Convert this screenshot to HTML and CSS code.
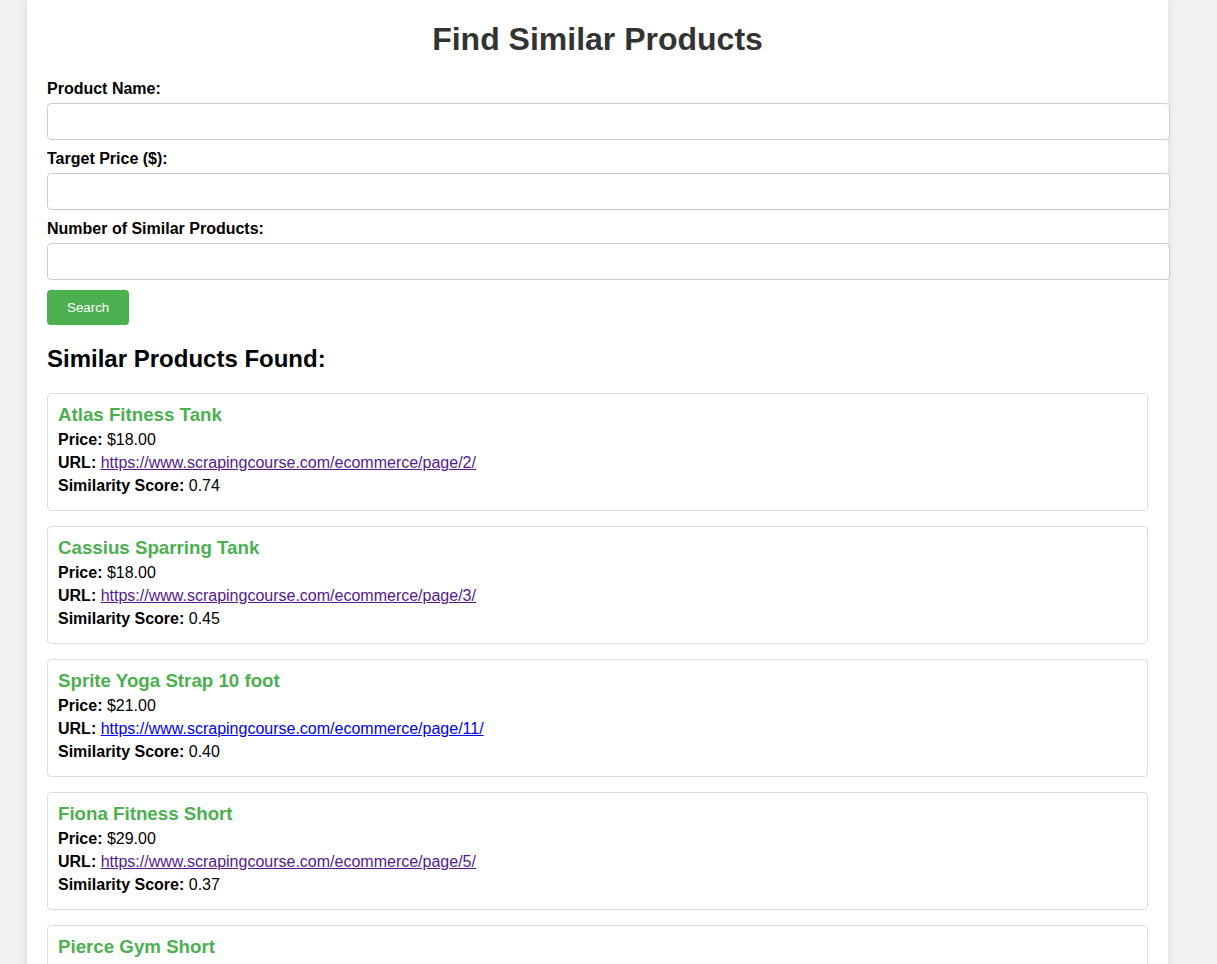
FILE: index.html
```html
<!DOCTYPE html>
<html lang="en">
<head>
<meta charset="utf-8">
<title>Find Similar Products</title>
<link rel="stylesheet" href="styles.css">
</head>
<body>
<div class="container">
  <h1 class="title">Find Similar Products</h1>
  <form class="search-form">
    <label class="field-label" for="name">Product Name:</label>
    <input class="field-input" id="name" type="text">
    <label class="field-label" for="price">Target Price ($):</label>
    <input class="field-input" id="price" type="text">
    <label class="field-label" for="count">Number of Similar Products:</label>
    <input class="field-input" id="count" type="text">
    <button class="search-btn" type="button">Search</button>
  </form>
  <h2 class="results-title">Similar Products Found:</h2>
  <div class="results">
    <div class="card">
      <h3 class="card-title">Atlas Fitness Tank</h3>
      <p class="card-line"><strong>Price:</strong> $18.00</p>
      <p class="card-line"><strong>URL:</strong> <a class="link visited" href="#">https://www.scrapingcourse.com/ecommerce/page/2/</a></p>
      <p class="card-line"><strong>Similarity Score:</strong> 0.74</p>
    </div>
    <div class="card">
      <h3 class="card-title">Cassius Sparring Tank</h3>
      <p class="card-line"><strong>Price:</strong> $18.00</p>
      <p class="card-line"><strong>URL:</strong> <a class="link visited" href="#">https://www.scrapingcourse.com/ecommerce/page/3/</a></p>
      <p class="card-line"><strong>Similarity Score:</strong> 0.45</p>
    </div>
    <div class="card">
      <h3 class="card-title">Sprite Yoga Strap 10 foot</h3>
      <p class="card-line"><strong>Price:</strong> $21.00</p>
      <p class="card-line"><strong>URL:</strong> <a class="link" href="#">https://www.scrapingcourse.com/ecommerce/page/11/</a></p>
      <p class="card-line"><strong>Similarity Score:</strong> 0.40</p>
    </div>
    <div class="card">
      <h3 class="card-title">Fiona Fitness Short</h3>
      <p class="card-line"><strong>Price:</strong> $29.00</p>
      <p class="card-line"><strong>URL:</strong> <a class="link visited" href="#">https://www.scrapingcourse.com/ecommerce/page/5/</a></p>
      <p class="card-line"><strong>Similarity Score:</strong> 0.37</p>
    </div>
    <div class="card">
      <h3 class="card-title">Pierce Gym Short</h3>
      <p class="card-line"><strong>Price:</strong> $27.00</p>
      <p class="card-line"><strong>URL:</strong> <a class="link visited" href="#">https://www.scrapingcourse.com/ecommerce/page/6/</a></p>
      <p class="card-line"><strong>Similarity Score:</strong> 0.35</p>
    </div>
  </div>
</div>
</body>
</html>
```
FILE: styles.css
```css
html, body {
  margin: 0;
  padding: 0;
}
body {
  background: #f2f2f2;
  font-family: "Liberation Sans", Arial, sans-serif;
  color: #000;
}
.container {
  width: 1101px;
  margin-left: 27px;
  padding: 21px 20px 20px;
  background: #fff;
  box-shadow: 0 0 10px rgba(0, 0, 0, 0.1);
}
.title {
  margin: 0 0 22.44px;
  font-size: 32px;
  text-align: center;
  color: #333;
}
.search-form {
  display: block;
}
.field-label {
  display: block;
  margin-bottom: 5px;
  font-weight: bold;
  font-size: 16px;
}
.field-input {
  display: block;
  box-sizing: content-box;
  width: 100%;
  padding: 10px;
  margin: 0 0 10px;
  border: 1px solid #ccc;
  border-radius: 4px;
  font-family: "Liberation Sans", Arial, sans-serif;
  font-size: 13.333px;
  height: 15px;
}
.search-btn {
  display: block;
  background: #4caf50;
  color: #fff;
  border: none;
  border-radius: 4px;
  padding: 10px 20px;
  font-family: "Liberation Sans", Arial, sans-serif;
  font-size: 13.333px;
  height: 35px;
  width: 82px;
  cursor: pointer;
}
.results-title {
  font-size: 24px;
  margin: 19.92px 0;
}
.card {
  border: 1px solid #ddd;
  border-radius: 4px;
  padding: 10px;
  margin-bottom: 15px;
}
.card-title {
  margin: 0;
  font-size: 18.72px;
  color: #4caf50;
}
.card-line {
  margin: 5px 0;
  font-size: 16px;
}
.link {
  color: #0000ee;
}
.link.visited {
  color: #551a8b;
}
```
